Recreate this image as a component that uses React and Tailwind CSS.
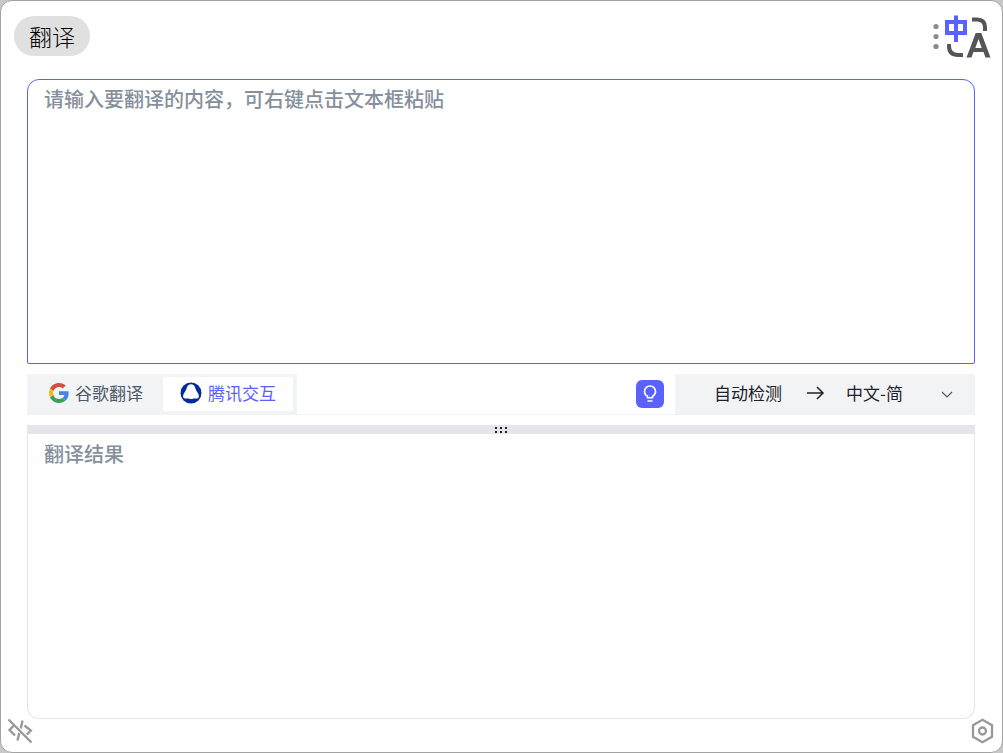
import React, { useState } from 'react';

const engines = [
  { id: 'google', name: '谷歌翻译', icon: GoogleIcon },
  { id: 'tencent', name: '腾讯交互', icon: TencentIcon }
];

function GoogleIcon() {
  return (
    <svg className="w-5 h-5" viewBox="0 0 48 48" aria-hidden="true">
      <path fill="#d3503f" d="M24 9.5c3.54 0 6.71 1.22 9.21 3.6l6.85-6.85C35.9 2.38 30.47 0 24 0 14.62 0 6.51 5.38 2.56 13.22l7.98 6.19C12.43 13.72 17.74 9.5 24 9.5z" />
      <path fill="#4285e4" d="M46.98 24.55c0-1.57-.15-3.09-.38-4.55H24v9.02h12.94c-.58 2.96-2.26 5.48-4.78 7.18l7.73 6c4.51-4.18 7.09-10.36 7.09-17.65z" />
      <path fill="#f2bb1d" d="M10.53 28.59A14.5 14.5 0 0 1 9.77 24c0-1.6.27-3.14.76-4.59l-7.98-6.19A23.9 23.9 0 0 0 0 24c0 3.88.92 7.54 2.56 10.78l7.97-6.19z" />
      <path fill="#3d9f58" d="M24 48c6.48 0 11.93-2.13 15.89-5.81l-7.73-6c-2.15 1.45-4.92 2.3-8.16 2.3-6.26 0-11.57-4.22-13.47-9.91l-7.98 6.19C6.51 42.62 14.62 48 24 48z" />
    </svg>
  );
}

function TencentIcon() {
  return (
    <svg className="w-[22px] h-[22px]" viewBox="0 0 22 22" aria-hidden="true">
      <circle cx="11" cy="11" r="10.5" fill="#042a9b" />
      <path fill="#fff" d="M11 2.3c2.200 0 3.600 1.300 4.200 3.400.6 2 1.300 3.300 2.300 4.700 1.900 2.700 1.700 5.200.3 5.900-1.200.6-2.300.1-3.300.1-1.300 0-1.900.6-3.500.6s-2.200-.6-3.500-.6c-1 0-2.100.5-3.300-.1-1.400-.7-1.600-3.200.3-5.900 1-1.400 1.700-2.700 2.300-4.700C7.400 3.600 8.800 2.300 11 2.300z" />
    </svg>
  );
}

function TranslateLogo() {
  return (
    <svg className="w-[60px] h-[46px]" viewBox="0 0 60 46" fill="none" aria-hidden="true">
      <g fill="#8a8a8a">
        <circle cx="5" cy="12.5" r="2.6" />
        <circle cx="5" cy="22.5" r="2.6" />
        <circle cx="5" cy="32.5" r="2.6" />
      </g>
      <path stroke="#5b61fb" strokeWidth="4" d="M16 8h18v11H16zM25 1.500V28" />
      <path stroke="#555" strokeWidth="4" d="M41 5.500h5q8 0 8 8v3.500M18 30v2q0 9 9 9h5" />
      <path fill="#555" fillRule="evenodd" d="M44.700 19h5.600L59.500 43.500h-5L52.500 38h-10L40.500 43.500h-5zM47.500 25 44.300 34h6.400z" />
    </svg>
  );
}

const App = () => {
  const [engine, setEngine] = useState('tencent');
  const [text, setText] = useState('');
  const [source, setSource] = useState('auto');
  const [target, setTarget] = useState('zh');

  return (
    <div className="h-screen bg-[#c8c8c8] font-['Noto_Sans_CJK_SC',sans-serif]">
      <div className="h-full flex flex-col bg-white border border-[#a3a3a3] rounded-xl overflow-hidden">
        <header className="flex items-start justify-between pl-[13px] pr-[11px] pt-[15px] pb-[21px]">
          <h1 className="h-10 px-[15px] flex items-center rounded-full bg-[#e0e0e0] text-[23px] font-light text-black">
            翻译
          </h1>
          <button type="button" aria-label="菜单" className="h-[42px] flex items-center">
            <TranslateLogo />
          </button>
        </header>

        <main className="flex-1 min-h-0 flex flex-col pl-[26px] pr-[27px]">
          <textarea
            aria-label="原文"
            value={text}
            onChange={(e) => setText(e.target.value)}
            placeholder="请输入要翻译的内容，可右键点击文本框粘贴"
            className="flex-1 min-h-0 w-full resize-none outline-none px-4 py-[3px] text-xl leading-8 text-[#1d2129] placeholder:text-[#86909c] placeholder:font-medium border border-[#5b61fb] rounded-t-xl rounded-b-xs"
          />

          {/* Toolbar */}
          <div className="flex items-center my-[10px] h-[41px] border-b border-[#f2f3f5]">
            <div className="flex items-center h-[41px] p-1 pl-[5px] gap-[3px] bg-[#f2f3f5] rounded-xs">
              {engines.map((item) => (
                <button
                  key={item.id}
                  type="button"
                  onClick={() => setEngine(item.id)}
                  className={`h-[34px] px-[17px] pb-[2px] flex items-center gap-[6px] rounded-xs text-[17px] ${
                    engine === item.id ? 'bg-white text-[#5b61fb]' : 'text-[#4e5969]'
                  }`}
                >
                  <item.icon />
                  {item.name}
                </button>
              ))}
            </div>

            <button
              type="button"
              aria-label="提示"
              className="ml-auto mr-[11px] w-7 h-7 flex items-center justify-center rounded-md bg-[#5b61fb] text-white"
            >
              <svg className="w-5 h-5" viewBox="0 0 20 20" fill="none" stroke="currentColor" strokeWidth="1.6" aria-hidden="true">
                <path d="M7.500 13.700v-1.500C5.700 11.300 4.500 9.500 4.500 7.500a5.500 5.500 0 0 1 11 0c0 2-1.200 3.800-3 4.700v1.500zM7.500 17h5" />
              </svg>
            </button>

            <div className="flex items-center w-[300px] h-[41px] pb-[2px] bg-[#f2f3f5] rounded-t-xs text-[17px] text-[#1d2129]">
              <select
                aria-label="源语言"
                value={source}
                onChange={(e) => setSource(e.target.value)}
                className="appearance-none outline-none w-[92px] ml-[39px]"
              >
                <option value="auto">自动检测</option>
                <option value="zh">中文-简</option>
                <option value="en">英语</option>
              </select>
              <svg className="w-5 h-5 shrink-0" viewBox="0 0 20 20" fill="none" stroke="currentColor" strokeWidth="1.5" aria-hidden="true">
                <path d="M1 10h16M11 4l6 6-6 6" />
              </svg>
              <div className="relative flex-1 flex items-center pl-5">
                <select
                  aria-label="目标语言"
                  value={target}
                  onChange={(e) => setTarget(e.target.value)}
                  className="appearance-none outline-none w-full"
                >
                  <option value="zh">中文-简</option>
                  <option value="en">英语</option>
                </select>
                <svg className="absolute right-[22px] w-3 h-3 pointer-events-none" viewBox="0 0 12 12" fill="none" stroke="#4e5969" strokeWidth="1.2" aria-hidden="true">
                  <path d="M1 5l5 5 5-5" />
                </svg>
              </div>
            </div>
          </div>

          {/* Split handle */}
          <div className="h-[9px] flex items-center justify-center bg-[#e5e6eb] cursor-row-resize">
            <svg className="w-3 h-[7px]" viewBox="0 0 12 7" fill="#1d2129" aria-hidden="true">
              <path d="M0 1h2v2H0zM5 1h2v2H5zM10 1h2v2h-2zM0 5h2v2H0zM5 5h2v2H5zM10 5h2v2h-2z" />
            </svg>
          </div>

          <textarea
            aria-label="译文"
            readOnly
            placeholder="翻译结果"
            className="flex-1 min-h-0 w-full resize-none outline-none px-4 py-[3px] text-xl leading-8 text-[#1d2129] placeholder:text-[#86909c] placeholder:font-medium border border-[#e5e6eb] border-t-white rounded-b-xl"
          />
        </main>

        <footer className="h-[33px] flex items-center justify-between pl-[6px] pr-[7px] pb-[10px]">
          <button type="button" aria-label="代码" className="text-[#999]">
            <svg className="w-[26px] h-[26px]" viewBox="0 0 26 26" fill="none" stroke="currentColor" strokeWidth="2.4" aria-hidden="true">
              <path d="M1.500 1.500l23 23M15.500 2.500l-1.700 8M12.300 15 10.500 22.500M6.500 8 2.500 12l5.500 5.500M17.500 7.500l6.300 5-4 4" />
            </svg>
          </button>
          <button type="button" aria-label="设置" className="text-[#999]">
            <svg className="w-[26px] h-[26px]" viewBox="0 0 26 26" fill="none" stroke="currentColor" strokeWidth="2.3" aria-hidden="true">
              <path d="M13.500 1.800 23 7.250v11.500L13.500 24.200 4 18.750V7.250z" />
              <circle cx="13.5" cy="13" r="3.5" />
            </svg>
          </button>
        </footer>
      </div>
    </div>
  );
};

export default App;
